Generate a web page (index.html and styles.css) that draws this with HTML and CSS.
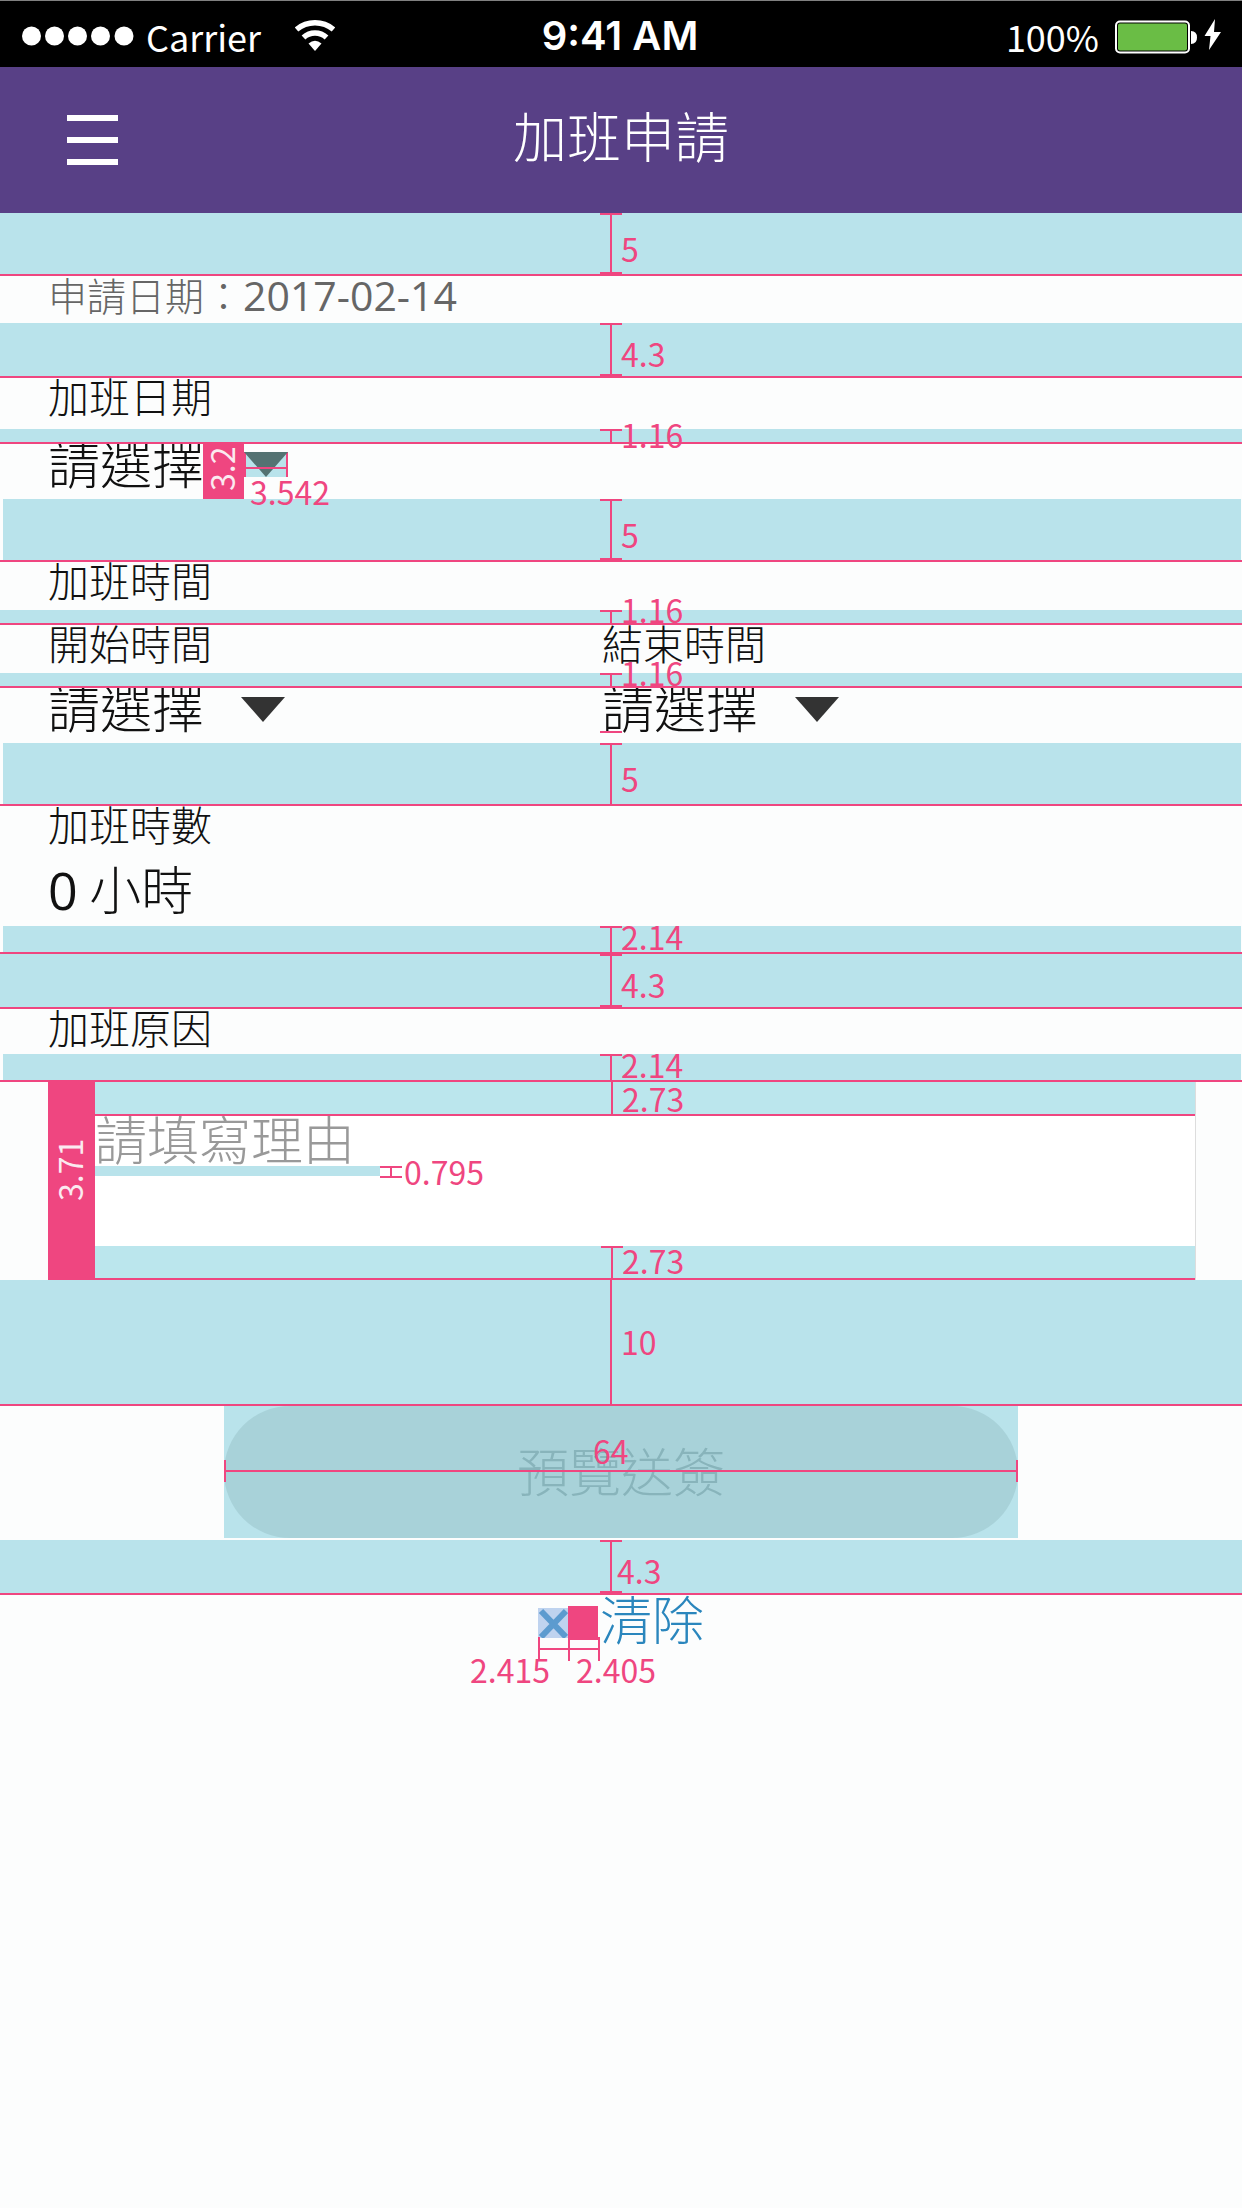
FILE: index.html
```html
<!DOCTYPE html>
<html lang="zh-Hant">
<head>
<meta charset="utf-8">
<meta name="viewport" content="width=device-width, initial-scale=1">
<title>加班申請</title>
<link rel="stylesheet" href="styles.css">
</head>
<body>
<div class="status">
  <div class="status-left">
    <svg class="dots" width="112" height="20" viewBox="0 0 112 20" aria-hidden="true"><g fill="#fff"><circle cx="9.500" cy="10" r="9.500"/><circle cx="32.500" cy="10" r="9.500"/><circle cx="55.500" cy="10" r="9.500"/><circle cx="78.500" cy="10" r="9.500"/><circle cx="102" cy="10" r="9.500"/></g></svg>
    <span class="carrier">Carrier</span>
    <svg class="wifi" width="40" height="32" viewBox="0 0 40 32" aria-hidden="true"><g fill="none" stroke="#fff" stroke-width="5.500"><path d="M1.500 9.500C12 0.500 28 0.500 38.500 9.500"/><path d="M8.500 17.500C15 11.500 25 11.500 31.500 17.500"/></g><path d="M13.500 23.500Q20 18 26.500 23.500L20 31Z" fill="#fff"/></svg>
  </div>
  <span class="clock">9:41 AM</span>
  <div class="status-right">
    <span class="percent">100%</span>
    <svg width="107" height="36" viewBox="0 0 107 36" aria-hidden="true"><rect x="1" y="3.500" width="73" height="31" rx="4" fill="none" stroke="#fff" stroke-width="2"/><rect x="3" y="5.500" width="69" height="27" rx="2" fill="#6abd45"/><path d="M76 13Q82 13 82 19.500T76 26Z" fill="#fff"/><path d="M100 1L89.500 18H95.500L94 32L106 14H99Z" fill="#fff"/></svg>
  </div>
</div>

<header class="header">
  <button class="menu" type="button" aria-label="選單"><span></span><span></span><span></span></button>
  <h1>加班申請</h1>
</header>

<form class="form">
  <div class="gap gap-5"><div class="ruler"><span>5</span></div></div>
  <p class="row row-short applied">申請日期：<time datetime="2017-02-14">2017-02-14</time></p>

  <div class="gap gap-4"><div class="ruler"><span class="low">4.3</span></div></div>
  <div class="row row-mid"><label class="label" for="date">加班日期</label></div>
  <div class="gap gap-1"><div class="ruler open"><span class="below">1.16</span></div></div>
  <div class="row row-tall picker">
    <select id="date"><option>請選擇</option></select>
    <div class="block">3.2</div>
    <div class="arrow-box">
      <svg class="arrow" width="44" height="25" viewBox="0 0 44 25" aria-hidden="true"><path d="M0 0H44L22 25Z" fill="#547272"/></svg>
      <span class="note">3.542</span>
    </div>
  </div>

  <div class="gap gap-5 inset"><div class="ruler"><span>5</span></div></div>
  <div class="row row-short"><span class="label">加班時間</span></div>
  <div class="gap gap-1"><div class="ruler open"><span>1.16</span></div></div>
  <div class="row row-short columns">
    <label class="label" for="start">開始時間</label>
    <label class="label" for="end">結束時間</label>
  </div>
  <div class="gap gap-1"><div class="ruler open"><span>1.16</span></div></div>
  <div class="row row-tall columns times">
    <div class="picker plain">
      <select id="start"><option>請選擇</option></select>
      <svg class="arrow" width="44" height="25" viewBox="0 0 44 25" aria-hidden="true"><path d="M0 0H44L22 25Z" fill="#333"/></svg>
    </div>
    <div class="picker plain">
      <select id="end"><option>請選擇</option></select>
      <svg class="arrow" width="44" height="25" viewBox="0 0 44 25" aria-hidden="true"><path d="M0 0H44L22 25Z" fill="#333"/></svg>
    </div>
    <i class="tick"></i>
  </div>

  <div class="gap gap-5 inset"><div class="ruler open"><span>5</span></div></div>
  <div class="row hours">
    <span class="label">加班時數</span>
    <output class="value"><span class="number">0</span> 小時</output>
  </div>

  <div class="gap gap-2 inset"><div class="ruler open"><span>2.14</span></div></div>
  <div class="gap gap-4"><div class="ruler"><span class="low">4.3</span></div></div>
  <div class="row row-tight"><label class="label" for="reason">加班原因</label></div>
  <div class="gap gap-2 inset"><div class="ruler open"><span>2.14</span></div></div>

  <div class="reason">
    <div class="side">3.71</div>
    <div class="reason-main">
      <div class="gap gap-3"></div>
      <textarea id="reason" placeholder="請填寫理由"></textarea>
      <div class="gap gap-3"></div>
      <div class="underline"><i></i><span>0.795</span></div>
    </div>
    <div class="ruler bare first"><span>2.73</span></div>
    <div class="ruler open last"><span>2.73</span></div>
  </div>

  <div class="gap gap-10"><div class="ruler bare"><span class="high">10</span></div></div>
  <div class="submit-area">
    <button class="submit" type="submit">預覽送簽</button>
    <div class="width-rule"><span>64</span></div>
  </div>
  <div class="gap gap-4"><div class="ruler near"><span class="low">4.3</span></div></div>

  <div class="clear-row">
    <button class="clear" type="reset">
      <svg width="30" height="30" viewBox="0 0 30 30" aria-hidden="true"><path d="M0 0H30V30H0Z" fill="#bfd3ef"/><path d="M3 3L28 29M28 3L3 29" stroke="#5c9bcf" stroke-width="6"/></svg>
      <i class="square"></i>
      <span>清除</span>
    </button>
    <div class="pair">
      <i></i><i></i>
      <span class="pair-a">2.415</span>
      <span class="pair-b">2.405</span>
    </div>
  </div>
</form>
</body>
</html>
```
FILE: styles.css
```css
:root {
  --pink: #ef4680;
  --band: #b9e3eb;
  --page: #fcfdfd;
  --cjk: "Noto Sans CJK TC", sans-serif;
  --latin: "Open Sans", sans-serif;
}

* { box-sizing: border-box; }

body {
  margin: 0;
  min-height: 100vh;
  background: var(--page);
  color: #111;
  font-family: var(--cjk);
  font-weight: 300;
}

p, h1 { margin: 0; font-weight: 300; }

button, select, textarea {
  margin: 0;
  padding: 0;
  border: 0;
  background: none;
  color: inherit;
  font: inherit;
}

/* Status bar */
.status {
  display: grid;
  grid-template-columns: 1fr auto 1fr;
  align-items: center;
  height: 67px;
  padding: 4px 20px 0 22px;
  border-top: 1px solid #808080;
  background: #000;
  color: #fff;
  font-size: 36px;
  font-weight: 400;
  line-height: 56px;
}

.status-left, .status-right { display: flex; align-items: center; }
.status-right { justify-content: flex-end; gap: 16px; }
.carrier { margin: 0 34px 0 12px; }
.clock { padding-right: 4px; font-family: Inter, sans-serif; font-size: 40px; font-weight: 600; }

/* Title bar */
.header {
  display: grid;
  grid-template-columns: 1fr auto 1fr;
  align-items: center;
  height: 146px;
  padding: 0 67px;
  background: #584086;
  color: #fff;
}

.header h1 { font-size: 54px; line-height: 60px; padding-bottom: 10px; }

.menu {
  display: flex;
  flex-direction: column;
  gap: 16px;
  width: 51px;
}

.menu span { height: 6px; background: #fff; }

/* Measured gaps */
.gap {
  position: relative;
  z-index: 1;
  box-sizing: content-box;
  border-bottom: 2px solid var(--pink);
  background: var(--band);
}

.gap-1 { height: 13px; }
.gap-2 { height: 26px; }
.gap-3 { height: 32px; }
.gap-4 { height: 53px; }
.gap-5 { height: 61px; }
.gap-10 { height: 124px; }
.inset { padding: 0 1px 0 3px; background-clip: content-box; }

.ruler {
  position: absolute;
  top: 0;
  bottom: 0;
  left: calc(50% - 21px);
  width: 22px;
  border: solid var(--pink);
  border-width: 2px 0;
  background: linear-gradient(var(--pink), var(--pink)) center / 2px 100% no-repeat;
}

.ruler.open { border-bottom-width: 0; }
.ruler.bare { border-width: 0; }

.ruler span, .note, .underline span, .width-rule span, .pair span {
  position: absolute;
  color: var(--pink);
  font-size: 32px;
  font-weight: 400;
  line-height: 24px;
}

.ruler span { left: 21px; bottom: 12px; }
.ruler.open span, .ruler.bare span { bottom: 4px; }
.gap-5 .open span { bottom: 14px; }
.gap-1 .open span { bottom: 2px; }
.gap-4 .ruler .low { bottom: 9px; }
.gap-1 .open .below { bottom: -4px; }
.ruler.bare .high { bottom: 51px; }
.ruler.near span { left: 17px; }

/* Rows */
.row { padding: 0 46px 0 48px; }
.row-tight { min-height: 45px; }
.row-short { min-height: 48px; }
.row-mid { min-height: 51px; }
.row-tall { min-height: 55px; }

.label { display: block; font-size: 41px; line-height: 34px; }

.applied {
  height: 47px;
  min-height: 0;
  color: #666;
  font-size: 39px;
  line-height: 36px;
}

.applied time, .number { font-family: var(--latin); font-weight: 400; }
.applied time { font-size: 41px; }

.columns { display: grid; grid-template-columns: 554fr 594fr; }
.times { position: relative; }

.picker { display: flex; align-items: flex-start; }

select {
  appearance: none;
  width: 155px;
  height: 56px;
  margin-top: -10px;
  font-size: 52px;
  line-height: 56px;
}

.plain { gap: 38px; }
.plain .arrow { margin-top: 9px; }

.block, .side {
  display: flex;
  align-items: center;
  justify-content: center;
  background: var(--pink);
  color: #fbeaf0;
  font-size: 32px;
  font-weight: 400;
  line-height: 32px;
  writing-mode: vertical-rl;
  transform: rotate(180deg);
}

.block { width: 41px; height: 55px; padding: 6px 0 0 5px; }

.arrow { display: block; }

.arrow-box {
  position: relative;
  z-index: 2;
  margin-top: 8px;
  border: solid var(--pink);
  border-width: 0 2px;
  width: 44px;
  background: var(--band);
}

.arrow-box .arrow { margin-left: -2px; }

.arrow-box::after {
  content: "";
  position: absolute;
  top: 15px;
  left: 0;
  right: 0;
  height: 2px;
  background: var(--pink);
}

.note { top: 27px; left: 4px; }

.tick {
  position: absolute;
  top: 43px;
  left: calc(50% - 21px);
  width: 22px;
  height: 2px;
  background: var(--pink);
}

.hours { min-height: 120px; }

.value {
  display: block;
  margin-top: 18px;
  font-size: 52px;
  line-height: 60px;
}

/* Reason box */
.reason {
  position: relative;
  display: flex;
  margin: 0 46px 0 48px;
}

.side { width: 47px; padding: 22px 0 0 5px; }

.reason-main {
  position: relative;
  flex: 1;
  border-right: 1px solid #ddd;
  background: #fff;
}

.reason-main .gap { background: #bbe6ed; }

textarea {
  display: block;
  width: 100%;
  height: 130px;
  overflow: hidden;
  resize: none;
  font-size: 52px;
  line-height: 44px;
}

textarea::placeholder { color: #999; opacity: 1; }

.reason > .ruler { z-index: 2; }
.ruler.first { bottom: auto; height: 32px; }
.ruler.last { top: auto; height: 34px; }
.ruler.last span { bottom: 8px; }

.underline {
  position: absolute;
  top: 84px;
  left: 0;
  width: 285px;
  height: 10px;
  background: var(--band);
}

.underline i {
  position: absolute;
  left: 100%;
  width: 22px;
  height: 12px;
  border: solid var(--pink);
  border-width: 2px 0;
  background: linear-gradient(var(--pink), var(--pink)) center / 2px 100% no-repeat;
}

.underline span { top: -7px; left: 309px; }

/* Actions */
.submit-area {
  position: relative;
  width: 64%;
  margin: 0 auto 2px;
  background: var(--band);
}

.submit {
  display: block;
  width: 100%;
  height: 132px;
  padding-bottom: 6px;
  border-radius: 66px;
  background: #a8d2d9;
  color: #88b4bb;
  font-size: 52px;
}

.width-rule {
  position: absolute;
  top: 54px;
  left: 0;
  right: 0;
  height: 22px;
  border: solid var(--pink);
  border-width: 0 2px;
  background: linear-gradient(var(--pink), var(--pink)) center / 100% 2px no-repeat;
}

.width-rule span { top: -22px; left: calc(50% - 28px); }

.clear-row { position: relative; display: flex; justify-content: center; }

.clear {
  display: flex;
  align-items: center;
  color: #2a86bd;
  font-size: 52px;
  line-height: 46px;
}

.clear svg, .square { margin-top: 10px; }
.square { width: 30px; height: 34px; margin-right: 2px; background: var(--pink); }

.pair {
  position: absolute;
  top: 42px;
  left: calc(50% - 83px);
  display: flex;
  width: 62px;
  height: 24px;
  border-left: 2px solid var(--pink);
  background: linear-gradient(var(--pink), var(--pink)) center / 100% 2px no-repeat;
}

.pair i { width: 30px; border-right: 2px solid var(--pink); }
.pair span { top: 20px; }
.pair-a { right: 50px; }
.pair-b { left: 36px; }
```
